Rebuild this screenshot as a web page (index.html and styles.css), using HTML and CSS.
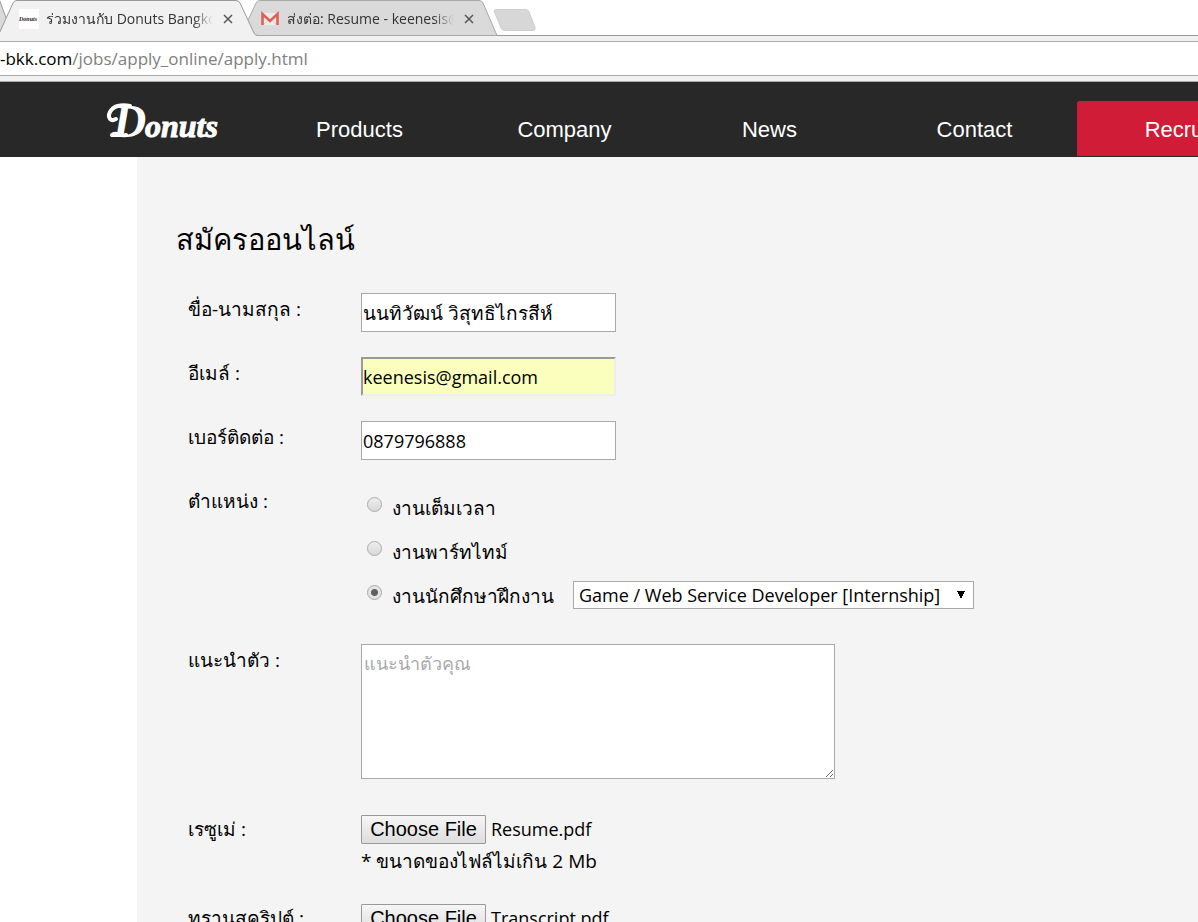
FILE: index.html
```html
<!DOCTYPE html>
<html lang="th">
<head>
<meta charset="utf-8">
<title>ร่วมงานกับ Donuts Bangkok</title>
<link rel="stylesheet" href="styles.css">
</head>
<body>
<div class="browser">
  <div class="tabs">
    <svg class="tab-previous" viewBox="0 0 8 36" aria-hidden="true"><path d="M-8 -20L6.500 19L0 33" fill="#dadada" stroke="#999"/></svg>
    <div class="tab tab-active">
      <svg class="tab-shape" viewBox="0 0 258 36" preserveAspectRatio="none" aria-hidden="true"><path d="M-2 36L13 3Q14 .5 17 .5H236Q239 .5 240 3L254 33Q255 35.500 258 35.500V37H-2Z" fill="#f1f1f1" stroke="#999"/></svg>
      <svg class="favicon" viewBox="0 0 20 20" aria-hidden="true"><rect width="20" height="20" fill="#fff"/><text class="favicon-text" x="0" y="12">Donuts</text></svg>
      <span class="tab-title">ร่วมงานกับ Donuts Bangko</span>
      <button class="tab-close" type="button" aria-label="Close tab"><svg viewBox="0 0 10 10"><path d="M1 1L9 9M9 1L1 9"/></svg></button>
    </div>
    <div class="tab tab-inactive">
      <svg class="tab-shape" viewBox="0 0 258 36" preserveAspectRatio="none" aria-hidden="true"><path d="M1 35.500L16 3Q17 .5 20 .5H239Q242 .5 243 3L257 35.500Z" fill="#dadada" stroke="#a8a8a8"/></svg>
      <svg class="favicon" viewBox="0 0 20 20" aria-hidden="true"><path d="M2 4H18V16H2Z" fill="#ececec"/><path d="M4 15L10 10L16 15" fill="none" stroke="#d5d5d5"/><path d="M2.500 16V5L10 12L17.500 5V16" fill="none" stroke="#df6055" stroke-width="2.600"/></svg>
      <span class="tab-title">ส่งต่อ: Resume - keenesis@</span>
      <button class="tab-close" type="button" aria-label="Close tab"><svg viewBox="0 0 10 10"><path d="M1 1L9 9M9 1L1 9"/></svg></button>
    </div>
    <button class="tab-new" type="button" aria-label="New tab"><svg viewBox="0 0 44 24"><path d="M3 1.500H33Q35 1.500 36 4L42 19Q43 22.500 40 22.500H12Q9 22.500 8 20L1.500 4Q1 1.500 3 1.500Z" fill="#d7d7d7" stroke="#cdcdcd"/></svg></button>
  </div>
  <div class="address"><span class="address-host">-bkk.com</span><span>/jobs/apply_online/apply.html</span></div>
</div>

<header class="site-header">
  <a class="logo" href="#" aria-label="Donuts">
    <svg viewBox="0 0 112 42" aria-hidden="true">
      <path d="M10 19C5 22 1 18 4 12C7 6 15 4 24 6" fill="none" stroke="#fff" stroke-width="4" stroke-linecap="round"/>
      <path d="M6 35C10 31 14 37 20 35" fill="none" stroke="#fff" stroke-width="4" stroke-linecap="round"/>
      <text class="logo-initial" x="7" y="37">D</text>
      <text class="logo-rest" x="39" y="37">onuts</text>
    </svg>
  </a>
  <nav class="site-nav">
    <a href="#">Products</a>
    <a href="#">Company</a>
    <a href="#">News</a>
    <a href="#">Contact</a>
    <a class="nav-current" href="#">Recruit</a>
  </nav>
</header>

<main class="panel">
  <h1>สมัครออนไลน์</h1>
  <form class="form">
    <div class="row">
      <label for="name">ขื่อ-นามสกุล :</label>
      <input class="text text-thai" id="name" type="text" value="นนทิวัฒน์ วิสุทธิไกรสีห์">
    </div>
    <div class="row">
      <label for="email">อีเมล์ :</label>
      <input class="text text-filled" id="email" type="email" value="keenesis@gmail.com">
    </div>
    <div class="row">
      <label for="phone">เบอร์ติดต่อ :</label>
      <input class="text" id="phone" type="tel" value="0879796888">
    </div>
    <div class="row" role="radiogroup" aria-labelledby="position">
      <span class="row-label" id="position">ตำแหน่ง :</span>
      <div class="options">
        <div class="option"><input type="radio" name="position" id="full"><label for="full">งานเต็มเวลา</label></div>
        <div class="option"><input type="radio" name="position" id="part"><label for="part">งานพาร์ทไทม์</label></div>
        <div class="option"><input type="radio" name="position" id="intern" checked><label for="intern">งานนักศึกษาฝึกงาน</label>
          <select aria-label="งานนักศึกษาฝึกงาน"><option>Game / Web Service Developer [Internship]</option></select>
        </div>
      </div>
    </div>
    <div class="row row-intro">
      <label for="intro">แนะนำตัว :</label>
      <textarea id="intro" placeholder="แนะนำตัวคุณ"></textarea>
    </div>
    <div class="row row-file">
      <label for="resume">เรซูเม่ :</label>
      <div>
        <input type="file" id="resume" data-name="Resume.pdf">
        <p class="note">* ขนาดของไฟล์ไม่เกิน 2 Mb</p>
      </div>
    </div>
    <div class="row row-file">
      <label for="transcript">ทรานสคริปต์ :</label>
      <div><input type="file" id="transcript" data-name="Transcript.pdf"></div>
    </div>
  </form>
</main>
<script src="files.js"></script>
</body>
</html>
```
FILE: styles.css
```css
* { box-sizing: border-box; }
body {
  margin: 0;
  background: #fff;
  color: #000;
  font-family: "Open Sans", "Noto Sans", sans-serif;
  font-size: 18px;
  overflow-x: hidden;
}
button { border: 0; padding: 0; background: none; }
a { color: inherit; text-decoration: none; }

/* browser bar */
.browser {
  background: #f1f1f1;
  border-bottom: 1px solid #aaa;
  padding-bottom: 5px;
}
.tabs {
  position: relative;
  display: flex;
  height: 36px;
  background: #fff;
  border-bottom: 1px solid #999;
}
.tab-previous { position: absolute; left: 0; top: 0; width: 8px; height: 36px; }
.tab {
  position: relative;
  display: flex;
  align-items: center;
  width: 258px;
  height: 36px;
  padding: 1px 25px 0 19px;
  font-size: 14px;
  color: #333;
}
.tab-active { z-index: 1; }
.tab-inactive { margin-left: -18px; padding: 1px 24px 0 20px; }
.tab-shape { position: absolute; inset: 0; width: 100%; height: 100%; }
.favicon { position: relative; flex: none; width: 20px; height: 20px; margin-right: 7px; }
.favicon-text { font: italic bold 6px "Liberation Serif", serif; fill: #222; }
.tab-title {
  position: relative;
  flex: 1;
  overflow: hidden;
  white-space: nowrap;
  line-height: 32px;
  mask-image: linear-gradient(to right, #000 88%, transparent);
}
.tab-close { position: relative; flex: none; width: 10px; height: 10px; margin: 0 0 0 10px; display: flex; }
.tab-close svg { width: 10px; height: 10px; fill: none; stroke: #555; stroke-width: 1.5; }
.tab-new { width: 44px; height: 24px; margin: 8px 0 0 -5px; }
.tab-new svg { display: block; width: 44px; height: 24px; }
.address {
  margin-top: 5px;
  height: 35px;
  background: #fff;
  border: 1px solid #aaa;
  border-width: 1px 0;
  line-height: 33px;
  font-size: 17px;
  color: #808080;
}
.address-host { color: #000; }

/* site header */
.site-header {
  display: flex;
  height: 75px;
  overflow: hidden;
  background: #282828;
  color: #fff;
  font-family: "Liberation Sans", Arial, sans-serif;
}
.logo { flex: none; width: 257px; padding: 18px 0 0 106px; }
.logo svg { display: block; width: 112px; height: 42px; overflow: visible; }
.logo-initial { font: italic bold 46px "Liberation Serif", serif; fill: #fff; }
.logo-rest { font: italic bold 32px "Liberation Serif", serif; fill: #fff; stroke: #fff; stroke-width: 1; }
.site-nav { display: flex; align-items: flex-end; padding-bottom: 1px; }
.site-nav a { flex: none; width: 205px; padding-top: 2px; line-height: 53px; text-align: center; font-size: 22px; }
.site-nav .nav-current { background: #d11c38; border-radius: 3px 3px 0 0; }

/* application form */
.panel { margin-left: 137px; padding: 58px 39px 20px; background: #f4f4f4; min-height: 765px; }
h1 { margin: 0 0 30px; font-size: 29px; font-weight: 400; line-height: 48px; }
.form { display: grid; gap: 25px; padding-left: 12px; }
.row { display: grid; grid-template-columns: 173px 1fr; align-items: start; line-height: 32px; }
.row-intro { margin-bottom: 11px; }
.row-file { line-height: 28px; }
label, .row-label, .note { font-size: 19px; }
input, select, textarea { font: inherit; color: #000; margin: 0; border-radius: 0; }
.text { width: 255px; height: 39px; padding: 1px; border: 1px solid #a9a9a9; background: #fff; }
.text-thai { font-size: 19px; }
.text-filled { padding: 1px 0; border: 2px solid; border-color: #999 #eee #eee #999; background: #faffbd; }
.options { padding: 1px 0; }
.option { display: flex; align-items: center; height: 44px; }
.option input {
  appearance: none;
  width: 15px;
  height: 15px;
  margin: 0 10px 7px 6px;
  border: 1px solid #aaa;
  border-radius: 50%;
  background: linear-gradient(#eee, #d8d8d8);
}
.option input:checked { background: radial-gradient(circle, #606060 0 3px, #e4e4e4 4px); }
select {
  appearance: none;
  width: 401px;
  height: 28px;
  margin: 0 0 2px 19px;
  padding: 0 24px 0 5px;
  border: 1px solid #a9a9a9;
  background: conic-gradient(from -27deg at 50% 100%, #000 54deg, transparent 0) no-repeat right 8px center / 8px 8px, #fff;
  background: linear-gradient(to bottom right, #000 50%, transparent 0) no-repeat right 7px center / 0 0, conic-gradient(from -27deg at 50% 100%, #000 54deg, transparent 0) no-repeat right 8px center / 8px 8px, #fff;
  line-height: 26px;
}
textarea {
  display: block;
  width: 474px;
  height: 135px;
  padding: 2px;
  border: 1px solid #a9a9a9;
  background: #fff;
}
textarea::placeholder { color: #a9a9a9; }
input[type="file"] { display: block; height: 29px; width: 400px; line-height: 26px; }
input[type="file"]::file-selector-button {
  width: 125px;
  height: 29px;
  margin: 0 5px 0 0;
  padding: 0;
  border: 1px solid #999;
  border-radius: 1px;
  background: linear-gradient(#f6f6f6, #ddd);
  color: #000;
  font: 20px "Liberation Sans", Arial, sans-serif;
}
.note { margin: 0; line-height: 35px; }
```
FILE: files.js
```js
document.querySelectorAll('input[type="file"]').forEach(function (input) {
  var transfer = new DataTransfer();
  transfer.items.add(new File(['pdf'], input.dataset.name, { type: 'application/pdf' }));
  input.files = transfer.files;
});
```
